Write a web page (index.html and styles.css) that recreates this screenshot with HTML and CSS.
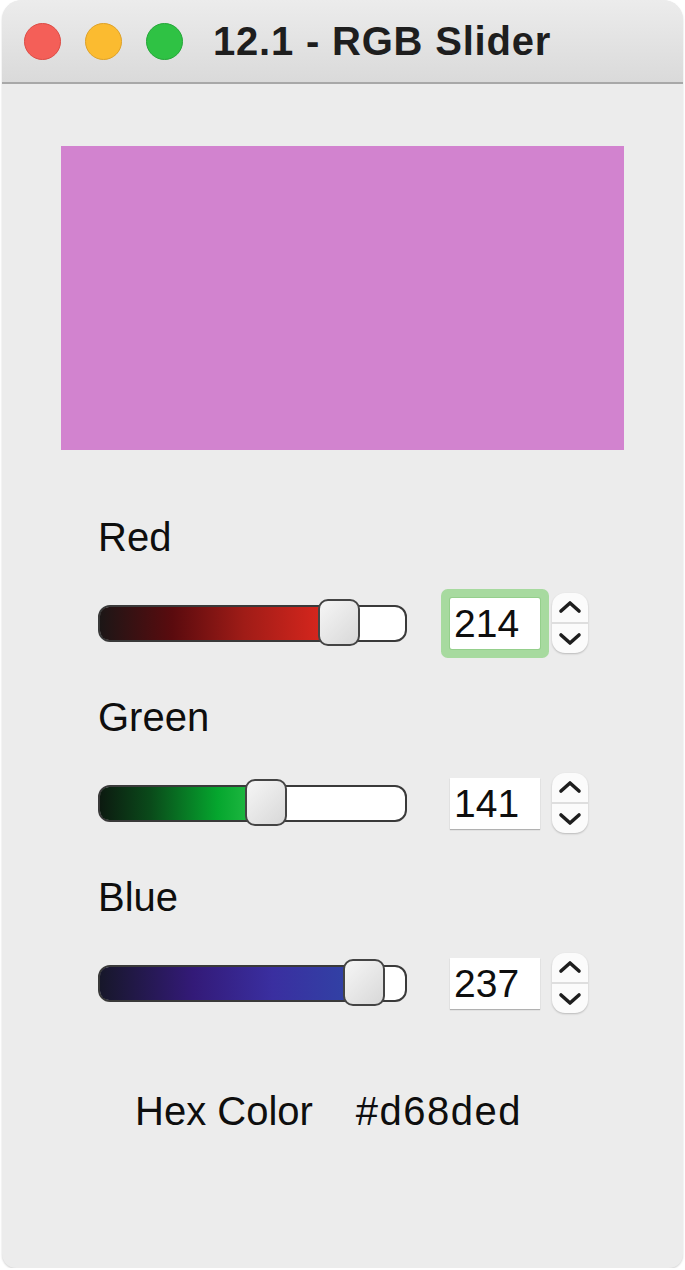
FILE: index.html
```html
<!DOCTYPE html>
<html>
<head>
<meta charset="utf-8">
<link rel="stylesheet" href="styles.css">
</head>
<body>
<div class="window">
  <div class="titlebar">
    <div class="lights">
      <span class="light red"></span>
      <span class="light yellow"></span>
      <span class="light green"></span>
    </div>
    <div class="title">12.1 - RGB Slider</div>
  </div>
  <div class="content">
    <div class="swatch"></div>
    <div class="channels">
      <div class="channel">
        <div class="label">Red</div>
        <div class="row">
          <div class="track">
            <div class="fill fill-red" style="width:241px"></div>
            <div class="thumb" style="left:218px"></div>
          </div>
          <div class="field focused">214</div>
          <div class="stepper">
            <svg width="36" height="60" viewBox="0 0 36 60"><path d="M9 18 L18 10 L27 18" fill="none" stroke="#1e1e1e" stroke-width="3.6" stroke-linecap="round" stroke-linejoin="round"/><line x1="0" y1="30" x2="36" y2="30" stroke="#d4d4d4" stroke-width="1.5"/><path d="M9 42 L18 50 L27 42" fill="none" stroke="#1e1e1e" stroke-width="3.6" stroke-linecap="round" stroke-linejoin="round"/></svg>
          </div>
        </div>
      </div>
      <div class="channel">
        <div class="label">Green</div>
        <div class="row">
          <div class="track">
            <div class="fill fill-green" style="width:168px"></div>
            <div class="thumb" style="left:145px"></div>
          </div>
          <div class="field">141</div>
          <div class="stepper">
            <svg width="36" height="60" viewBox="0 0 36 60"><path d="M9 18 L18 10 L27 18" fill="none" stroke="#1e1e1e" stroke-width="3.6" stroke-linecap="round" stroke-linejoin="round"/><line x1="0" y1="30" x2="36" y2="30" stroke="#d4d4d4" stroke-width="1.5"/><path d="M9 42 L18 50 L27 42" fill="none" stroke="#1e1e1e" stroke-width="3.6" stroke-linecap="round" stroke-linejoin="round"/></svg>
          </div>
        </div>
      </div>
      <div class="channel">
        <div class="label">Blue</div>
        <div class="row">
          <div class="track">
            <div class="fill fill-blue" style="width:266px"></div>
            <div class="thumb" style="left:243px"></div>
          </div>
          <div class="field">237</div>
          <div class="stepper">
            <svg width="36" height="60" viewBox="0 0 36 60"><path d="M9 18 L18 10 L27 18" fill="none" stroke="#1e1e1e" stroke-width="3.6" stroke-linecap="round" stroke-linejoin="round"/><line x1="0" y1="30" x2="36" y2="30" stroke="#d4d4d4" stroke-width="1.5"/><path d="M9 42 L18 50 L27 42" fill="none" stroke="#1e1e1e" stroke-width="3.6" stroke-linecap="round" stroke-linejoin="round"/></svg>
          </div>
        </div>
      </div>
    </div>
    <div class="hex">
      <span class="hex-label">Hex Color</span>
      <span class="hex-value">#d68ded</span>
    </div>
  </div>
</div>
</body>
</html>
```

FILE: styles.css
```css
html, body {
  margin: 0;
  padding: 0;
  background: #ffffff;
}
body {
  font-family: "Liberation Sans", Arial, sans-serif;
  color: #111;
}
.window {
  margin-left: 2px;
  width: 681px;
  height: 1268px;
  background: #ececec;
  border-radius: 20px 20px 14px 14px;
  overflow: hidden;
  box-shadow: 0 1px 2px rgba(0,0,0,0.18);
  display: flex;
  flex-direction: column;
}
.titlebar {
  height: 82px;
  flex: none;
  border-bottom: 2px solid #a8a8a8;
  background: linear-gradient(#ececec, #dadada);
  display: flex;
  align-items: center;
  padding-left: 22px;
  box-sizing: content-box;
}
.lights {
  display: flex;
  gap: 24px;
  margin-right: 30px;
  margin-top: 1px;
}
.light {
  width: 35px;
  height: 35px;
  border-radius: 50%;
  border: 1px solid;
  display: block;
}
.light.red { background: #f45f58; border-color: #dc4b44; }
.light.yellow { background: #fbbb30; border-color: #dea127; }
.light.green { background: #2fc244; border-color: #24a638; }
.title {
  font-weight: bold;
  font-size: 40px;
  color: #1e1e1e;
  letter-spacing: 0.8px;
}
.content {
  padding: 62px 0 0 59px;
}
.swatch {
  width: 563px;
  height: 304px;
  background: #d283cf;
}
.channels {
  margin-top: 63px;
  padding-left: 37px;
  display: flex;
  flex-direction: column;
  gap: 34px;
}
.channel {
  display: flex;
  flex-direction: column;
}
.label {
  font-size: 40px;
  line-height: 48px;
  height: 48px;
  margin-bottom: 26px;
  color: #0e0e0e;
}
.row {
  height: 72px;
  display: flex;
  align-items: center;
}
.track {
  position: relative;
  width: 309px;
  height: 37px;
  box-sizing: border-box;
  border: 2.5px solid #3a3a3a;
  border-radius: 12px;
  background: #ffffff;
}
.fill {
  height: 100%;
  border-radius: 9px 0 0 9px;
}
.fill-red {
  background: linear-gradient(90deg, #1c1616 0%, #5a0b0e 30%, #a01c17 60%, #e4291f 100%);
}
.fill-green {
  background: linear-gradient(90deg, #0c1a10 0%, #0a4a1a 30%, #05a62e 70%, #2ec24c 100%);
}
.fill-blue {
  background: linear-gradient(90deg, #17172a 0%, #331a78 35%, #3a2fa0 65%, #2f46a6 100%);
}
.thumb {
  position: absolute;
  top: -8px;
  width: 42px;
  height: 47px;
  box-sizing: border-box;
  border: 2.5px solid #444;
  border-radius: 10px;
  background: linear-gradient(135deg, #f6f6f6 0%, #d8d8d8 100%);
}
.field {
  margin-left: 43px;
  width: 90px;
  height: 51px;
  box-sizing: border-box;
  background: #fff;
  font-size: 39px;
  line-height: 52px;
  padding-left: 4px;
  color: #0e0e0e;
  box-shadow: 0 1px 1px rgba(0,0,0,0.25);
}
.field.focused {
  box-shadow: 0 0 0 1px #95cf8c, 0 0 0 9px #a7da9f;
  border-radius: 2px;
}
.stepper {
  margin-left: 12px;
  width: 36px;
  height: 60px;
  border-radius: 13px;
  background: #fbfbfb;
  box-shadow: 0 1px 2px rgba(0,0,0,0.22);
  overflow: hidden;
}
.stepper svg {
  display: block;
}
.hex {
  margin-top: 68px;
  padding-left: 74px;
  display: flex;
  gap: 43px;
  font-size: 40px;
  line-height: 48px;
  color: #0e0e0e;
}
.hex-value {
  letter-spacing: 1.5px;
}
```
